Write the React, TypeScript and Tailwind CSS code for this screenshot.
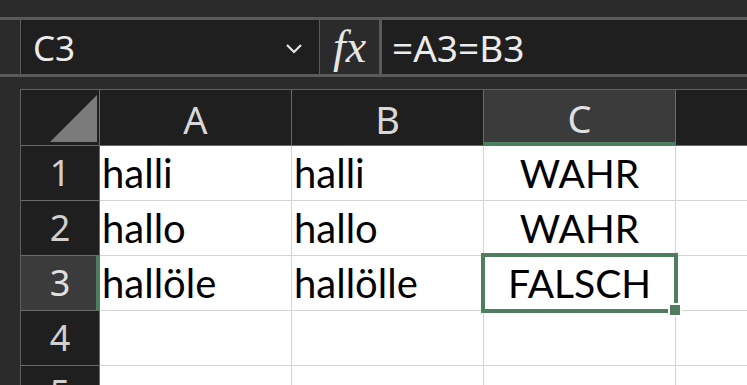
const cols = ["A", "B", "C"];

const rows = [
  { n: 1, a: "halli", b: "halli", c: "WAHR" },
  { n: 2, a: "hallo", b: "hallo", c: "WAHR" },
  { n: 3, a: "hallöle", b: "hallölle", c: "FALSCH" },
  { n: 4, a: "", b: "", c: "" },
  { n: 5, a: "", b: "", c: "" },
];

const headFont = { fontFamily: '"Noto Sans", "Liberation Sans", sans-serif' };
const cellFont = { fontFamily: 'Lato, "Liberation Sans", sans-serif' };

const App = () => {
  return (
    <div className="flex h-[385px] w-[747px] flex-col overflow-hidden bg-[#2b2b2b]" style={headFont}>
      <div className="h-[17px] shrink-0" />
      <div className="h-[3px] shrink-0 bg-[#5a5a5a]" />

      {/* name box + formula bar */}
      <div className="flex h-[54px] shrink-0">
        <div className="w-[20px] shrink-0" />
        <div className="flex w-[300px] shrink-0 items-center justify-between border-x border-[#5a5a5a] bg-[#1f1f1f] pl-[12px] pr-[16px]">
          <span className="text-[35px] leading-none text-[#ececec]">C3</span>
          <svg width="18" height="11" viewBox="0 0 18 11" className="mt-[2px]">
            <polyline points="2,2 9,9 16,2" fill="none" stroke="#e6e6e6" strokeWidth="2.2" />
          </svg>
        </div>
        <div className="flex w-[59px] shrink-0 items-center justify-center bg-[#2b2b2b]">
          <span
            className="text-[46px] italic leading-none text-[#e6e6e6]"
            style={{ fontFamily: '"Liberation Serif", serif' }}
          >
            fx
          </span>
        </div>
        <div className="w-[3px] shrink-0 bg-[#5a5a5a]" />
        <div className="flex flex-1 items-center bg-[#1f1f1f] pl-[10px]">
          <span className="text-[37px] leading-none text-[#ececec]">=A3=B3</span>
        </div>
      </div>
      <div className="h-[3px] shrink-0 bg-[#5a5a5a]" />
      <div className="h-[12px] shrink-0" />

      {/* sheet */}
      <div className="flex flex-1">
        <div className="w-[20px] shrink-0" />
        <div className="relative grid flex-1 grid-cols-[79px_192px_192px_192px_1fr] grid-rows-[56px_55px_55px_55px_55px_55px] content-start border-l border-t border-[#5f5f5f]">
          {/* corner */}
          <div className="flex items-end justify-end border-b border-r border-[#6a6a6a] bg-[#1f1f1f] pb-[3px] pr-[2px]">
            <svg width="47" height="47" viewBox="0 0 47 47">
              <polygon points="0,47 47,47 47,0" fill="#7b7b7b" />
            </svg>
          </div>
          {cols.map((c) => (
            <div
              key={c}
              className={
                c === "C"
                  ? "flex items-center justify-center border-b-[4px] border-r border-b-[#4e7d5f] border-r-[#6a6a6a] bg-[#3b3b3b] pt-[4px] text-[38px] text-[#e0e0e0]"
                  : "flex items-center justify-center border-b border-r border-[#6a6a6a] bg-[#1f1f1f] pt-[2px] text-[38px] text-[#d8d8d8]"
              }
            >
              <span className="leading-none">{c}</span>
            </div>
          ))}
          <div className="border-b border-[#6a6a6a] bg-[#1f1f1f]" />

          {rows.map((r) => (
            <div key={r.n} className="contents">
              <div
                className={
                  r.n === 3
                    ? "flex items-center justify-center border-b border-r-[4px] border-b-[#6a6a6a] border-r-[#4e7d5f] bg-[#3b3b3b] pl-[3px] text-[36px] text-[#e0e0e0]"
                    : "flex items-center justify-center border-b border-r border-[#6a6a6a] bg-[#1f1f1f] text-[36px] text-[#d0d0d0]"
                }
              >
                <span className="leading-none">{r.n}</span>
              </div>
              <div className="flex items-center border-b border-r border-[#d4d4d4] bg-white pl-[2px] text-[40px] text-black" style={cellFont}>
                {r.a}
              </div>
              <div className="flex items-center border-b border-r border-[#d4d4d4] bg-white pl-[2px] text-[40px] text-black" style={cellFont}>
                {r.b}
              </div>
              <div className="flex items-center justify-center border-b border-r border-[#d4d4d4] bg-white text-[39px] text-black" style={cellFont}>
                {r.c}
              </div>
              <div className="border-b border-[#d4d4d4] bg-white" />
            </div>
          ))}

          {/* active cell C3 */}
          <div className="pointer-events-none absolute left-[460px] top-[163px] h-[60px] w-[197px] border-[4px] border-[#4e7d5f]" />
          <div className="pointer-events-none absolute left-[647px] top-[213px] h-[14px] w-[14px] border-[2px] border-white bg-[#4e7d5f]" />
        </div>
      </div>
    </div>
  );
};

export default App;
